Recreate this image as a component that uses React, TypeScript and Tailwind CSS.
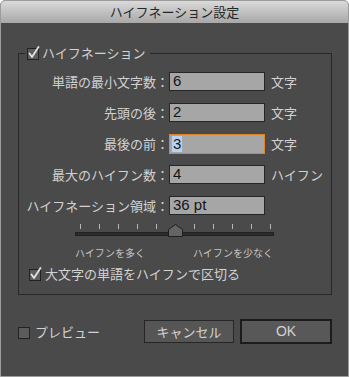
import React from 'react'

const rows = [
  { label: '単語の最小文字数：', value: '6', unit: '文字' },
  { label: '先頭の後：', value: '2', unit: '文字' },
  { label: '最後の前：', value: '3', unit: '文字', focus: true },
  { label: '最大のハイフン数：', value: '4', unit: 'ハイフン' },
  { label: 'ハイフネーション領域：', value: '36 pt', unit: '' },
]

function Check({ on }: { on?: boolean }) {
  return (
    <svg width="14" height="14" viewBox="0 0 14 14" className="shrink-0">
      <rect x="1.5" y="2.5" width="11" height="11" fill="#5c5c5c" stroke="#222" />
      {on && (
        <path d="M3.5 7.5 L6 11 L12.5 1" fill="none" stroke="#e2e2e2" strokeWidth="1.8" strokeLinecap="round" strokeLinejoin="round" />
      )}
    </svg>
  )
}

function Slider() {
  const ticks = Array.from({ length: 11 }, (_, i) => 5 + i * 19)
  return (
    <svg width="200" height="14" viewBox="0 0 200 14">
      {ticks.map((x, i) =>
        i === 5 ? null : <line key={x} x1={x + 0.5} y1="0" x2={x + 0.5} y2="5" stroke="#b8b8b8" />
      )}
      <rect x="0.5" y="8.5" width="198" height="3" fill="#2c2c2c" stroke="#222" />
      <polygon points="93.5,12.5 93.5,5.5 100.5,0.5 107.5,5.5 107.5,12.5" fill="#646464" stroke="#1f1f1f" />
    </svg>
  )
}

export default function App() {
  return (
    <div className="w-[349px] h-[377px] flex flex-col bg-[#4a4a4a] border border-[#9c9c9c] rounded-t-[5px] overflow-hidden font-['Noto_Sans_CJK_JP',sans-serif] text-[13px] text-[#d2d2d2]">
      {/* Title bar */}
      <div className="h-[22px] shrink-0 bg-gradient-to-b from-[#dadada] to-[#a8a8a8] text-center leading-[22px] text-[#262626]">
        ハイフネーション設定
      </div>

      {/* Group */}
      <fieldset className="ml-[17px] mt-[22px] w-[314px] h-[250px] border border-[#282828] pl-0 pr-0">
        <legend className="ml-[6px] px-[1px] flex items-center gap-[2px] leading-[16px] pr-[5px]">
          <Check on />
          <span>ハイフネーション</span>
        </legend>

        <div className="mt-[11px] flex flex-col gap-[12px]">
          {rows.map((r) => (
            <div key={r.label} className="flex items-center h-[19px]">
              <div className="w-[150px] text-right whitespace-nowrap">{r.label}</div>
              <div
                className={
                  r.focus
                    ? 'w-[96px] h-[20px] bg-[#a6a6a6] border border-[#e0862a] flex items-center pl-[2px] font-["Liberation_Sans",sans-serif] text-[15px] text-[#151515]'
                    : 'w-[96px] h-[19px] bg-[#a6a6a6] border border-[#262626] flex items-center pl-[3px] font-["Liberation_Sans",sans-serif] text-[15px] text-[#151515]'
                }
              >
                {r.focus ? <span className="bg-[#b6d3f7] px-[1px] leading-[16px]">{r.value}</span> : r.value}
              </div>
              {r.unit && <div className="ml-[6px] whitespace-nowrap">{r.unit}</div>}
            </div>
          ))}
        </div>

        <div className="ml-[56px] mt-[9px] w-[200px]">
          <Slider />
          <div className="flex justify-between w-[198px] mt-[9px] text-[10px] leading-[12px] text-[#c4c4c4]">
            <span>ハイフンを多く</span>
            <span>ハイフンを少なく</span>
          </div>
        </div>

        <div className="ml-[9px] mt-[5px] flex items-center gap-[3px]">
          <Check on />
          <span>大文字の単語をハイフンで区切る</span>
        </div>
      </fieldset>

      {/* Footer */}
      <div className="mt-[24px] pl-[16px] pr-[16px] flex items-center">
        <div className="flex items-center gap-[4px]">
          <Check />
          <span>プレビュー</span>
        </div>
        <div className="ml-auto flex items-center gap-[6px]">
          <button className="w-[90px] h-[23px] bg-[#565656] border border-[#262626] text-[#d2d2d2] text-[13px]">
            キャンセル
          </button>
          <button className="w-[92px] h-[25px] bg-[#585858] border-2 border-[#1c1c1c] text-[#d2d2d2] text-[14px] font-['Liberation_Sans',sans-serif]">
            OK
          </button>
        </div>
      </div>
    </div>
  )
}
